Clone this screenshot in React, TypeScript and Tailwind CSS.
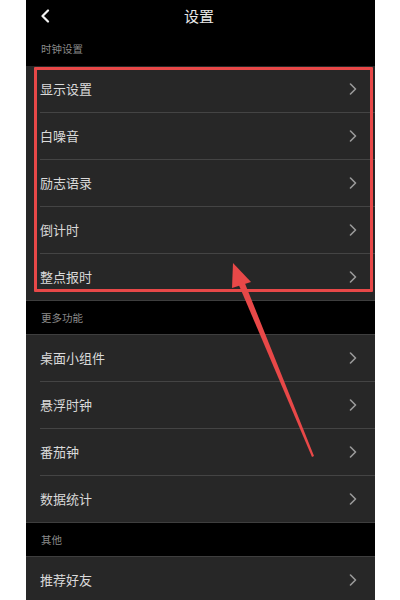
import React from 'react';

type Group = { title: string; items: string[] };

const groups: Group[] = [
  { title: '时钟设置', items: ['显示设置', '白噪音', '励志语录', '倒计时', '整点报时'] },
  { title: '更多功能', items: ['桌面小组件', '悬浮时钟', '番茄钟', '数据统计'] },
  { title: '其他', items: ['推荐好友'] },
];

const font = { fontFamily: '"Noto Sans CJK SC", "Noto Sans", sans-serif' };

const Chevron: React.FC = () => (
  <svg width="8" height="12" viewBox="0 0 8 12" fill="none">
    <polyline points="1.5,1 6.5,6 1.5,11" stroke="#9a9a9a" strokeWidth="1.6" strokeLinecap="round" strokeLinejoin="round" />
  </svg>
);

const App: React.FC = () => {
  return (
    <div className="w-[400px] h-[600px] bg-white relative overflow-hidden" style={font}>
      <div className="ml-[26px] w-[349px] h-[600px] bg-black relative overflow-hidden">
        {/* Top bar */}
        <div className="h-[32px] relative flex items-center justify-center">
          <svg className="absolute left-[14px] top-[9px]" width="10" height="14" viewBox="0 0 10 14" fill="none">
            <polyline points="8,1.5 2.5,7 8,12.5" stroke="#f2f2f2" strokeWidth="2.2" strokeLinecap="round" strokeLinejoin="round" />
          </svg>
          <span className="text-[15px] text-[#e8e8e8] -ml-[3px]">设置</span>
        </div>

        {groups.map((group, gi) => (
          <div key={group.title}>
            <div
              className={`flex items-center pl-[15px] text-[10.5px] text-[#8a8a8a] ${
                gi === 0 ? 'h-[34px]' : 'h-[33px]'
              }`}
            >
              {group.title}
            </div>
            <div className={`bg-[#272727] border-b border-[#3e3e3e] ${gi === 0 ? '' : 'border-t'}`}>
              {group.items.map((item, i) => {
                const last = i === group.items.length - 1;
                return (
                  <div key={item} className="pl-[14px]">
                    <div
                      className={`flex items-center justify-between pr-[18px] ${
                        last ? 'h-[46px]' : 'h-[47px] border-b border-[#444444]'
                      }`}
                    >
                      <span className="text-[13px] text-[#dadada]">{item}</span>
                      <Chevron />
                    </div>
                  </div>
                );
              })}
            </div>
          </div>
        ))}

        {/* Highlight frame over the clock settings */}
        <div className="absolute left-[8px] top-[67px] w-[339px] h-[225px] border-[3px] border-[#e84848] rounded-[1px]" />
      </div>

      {/* Pointer arrow */}
      <svg className="absolute left-0 top-0 pointer-events-none" width="400" height="600" viewBox="0 0 400 600">
        <polygon points="233,263 232,288 251,282" fill="#e84848" />
        <polygon points="238,283 244,281 314,456 312,457" fill="#e84848" />
      </svg>
    </div>
  );
};

export default App;
